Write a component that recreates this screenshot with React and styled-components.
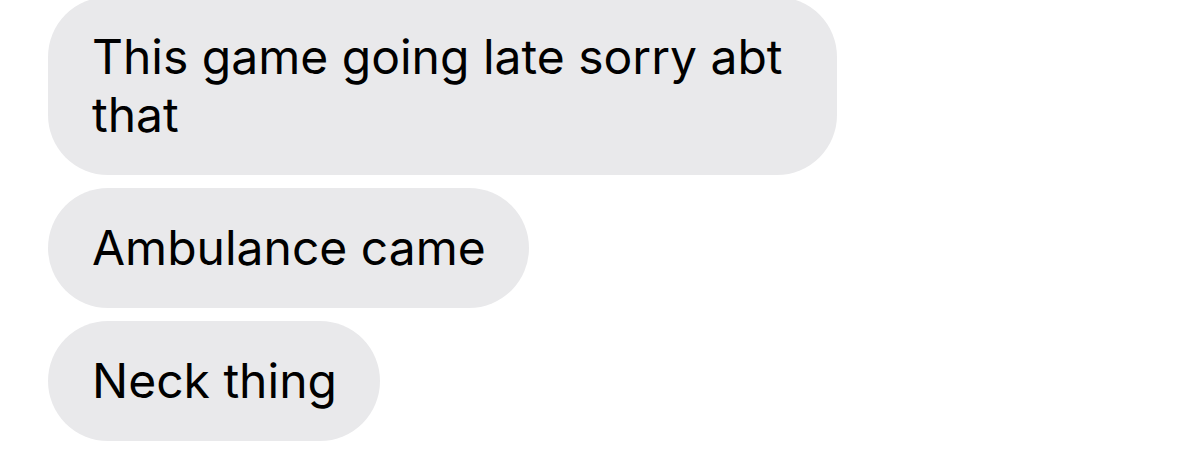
import React from "react";
import styled, { createGlobalStyle } from "styled-components";

const GlobalStyle = createGlobalStyle`
  body {
    margin: 0;
    background: #fff;
    font-family: Inter, "Liberation Sans", sans-serif;
    -webkit-font-smoothing: antialiased;
  }
`;

const Thread = styled.div`
  display: flex;
  flex-direction: column;
  align-items: flex-start;
  gap: 13px;
  margin-top: -3px;
  padding-left: 48px;
`;

const Bubble = styled.div`
  max-width: 789px;
  box-sizing: border-box;
  padding: 31px 43px 31px 44px;
  background-color: #e9e9eb;
  border-radius: 60px;
  color: #000;
  font-size: 48px;
  line-height: 58px;
`;

const messages = [
  "This game going late sorry abt that",
  "Ambulance came",
  "Neck thing",
];

const App = () => {
  return (
    <>
      <GlobalStyle />
      <Thread>
        {messages.map((text, i) => (
          <Bubble key={i}>{text}</Bubble>
        ))}
      </Thread>
    </>
  );
};

export default App;
